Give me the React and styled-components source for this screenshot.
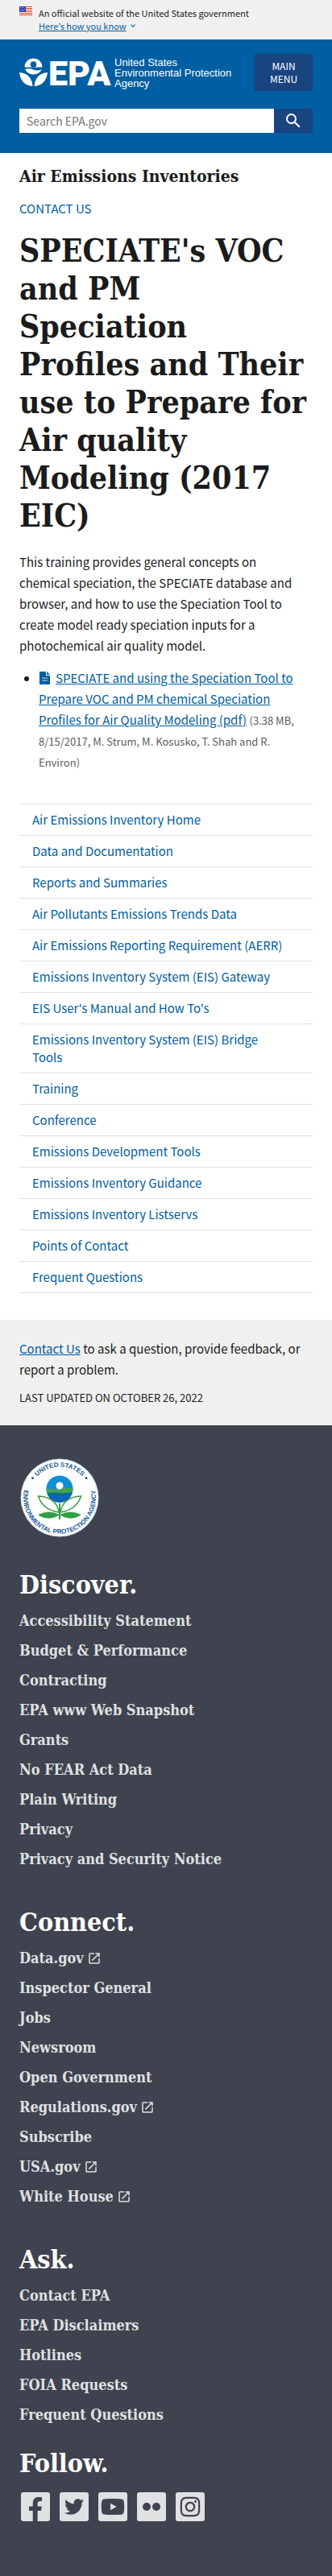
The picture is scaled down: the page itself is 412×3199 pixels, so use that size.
import React from "react";
import styled, { createGlobalStyle } from "styled-components";
import { MdExpandMore, MdLaunch, MdSearch } from "react-icons/md";
import { FaFacebookF, FaTwitter, FaYoutube, FaInstagram } from "react-icons/fa";

const sans = `"Noto Sans CJK KR", "Noto Sans", sans-serif`;
const serif = `"DejaVu Serif Condensed", "DejaVu Serif", serif`;

const GlobalStyle = createGlobalStyle`
  *, *::before, *::after { box-sizing: border-box; }
  body {
    margin: 0;
    background: #fff;
    color: #1b1b1b;
    font-family: ${sans};
    font-size: 15px;
    line-height: 26px;
  }
`;

const Link = styled.a`
  color: #005ea2;
  text-decoration: ${(p) => (p.$plain ? "none" : "underline")};
`;

const Banner = styled.section`
  display: flex;
  gap: 8px;
  padding: 8px 24px 9px;
  background: #f0f0f0;
  font-size: 11px;
  line-height: 16px;
`;

const BannerText = styled.div`
  display: flex;
  flex-direction: column;
  align-items: flex-start;
`;

const BannerToggle = styled.button`
  display: flex;
  align-items: center;
  gap: 2px;
  padding: 0;
  border: 0;
  background: none;
  color: #005ea2;
  font: inherit;
  cursor: pointer;

  span { text-decoration: underline; }
`;

const Header = styled.header`
  display: flex;
  flex-direction: column;
  gap: 22px;
  padding: 18px 24px 25px;
  background: #005ea2;
  color: #fff;
`;

const HeaderTop = styled.div`
  display: flex;
  justify-content: space-between;
  align-items: center;
`;

const Brand = styled.a`
  display: flex;
  align-items: center;
  gap: 4px;
  color: #fff;
  text-decoration: none;
  font-family: "Liberation Sans", sans-serif;
  font-size: 13px;
  line-height: 13px;
`;

const Logo = styled.svg`
  overflow: visible;
`;

const MenuButton = styled.button`
  width: 72px;
  padding: 7px 8px;
  border: 0;
  background: #1a4480;
  color: #fff;
  font-family: ${sans};
  font-size: 12px;
  line-height: 16px;
  text-transform: uppercase;
  cursor: pointer;
`;

const Search = styled.form`
  display: flex;
  height: 30px;
`;

const SearchInput = styled.input`
  flex: 1;
  min-width: 0;
  padding: 0 8px;
  border: 1px solid #fff;
  border-radius: 0;
  background: #fff;
  color: #1b1b1b;
  font-family: ${sans};
  font-size: 14px;

  &::placeholder { color: #757575; opacity: 1; }
`;

const SearchButton = styled.button`
  display: flex;
  align-items: center;
  justify-content: center;
  width: 48px;
  padding: 0;
  border: 0;
  background: #1a4480;
  color: #fff;
  cursor: pointer;
`;

const Main = styled.main`
  padding: 16px 24px 33px;
`;

const SiteName = styled.h2`
  margin: 0 0 14px;
  font-family: ${serif};
  font-size: 21px;
  line-height: 26px;
`;

const Title = styled.h1`
  margin: 16px 0 21px;
  font-family: ${serif};
  font-size: 39px;
  line-height: 47px;
`;

const Paragraph = styled.p`
  margin: 0;
`;

const Intro = styled(Paragraph)`
  padding-right: 12px;
`;

const Documents = styled.ul`
  margin: 14px 0 39px;
  padding-left: 24px;
`;

const FileDetails = styled.span`
  color: #5c5c5c;
  font-size: 13px;
  line-height: 20px;
`;

const FileIcon = styled.svg`
  margin-right: 6px;
  vertical-align: -2px;
`;

const SideNav = styled.ul`
  margin: 0;
  padding: 0;
  list-style: none;
  border-bottom: 1px solid #dfe1e2;
`;

const SideItem = styled.li`
  border-top: 1px solid #dfe1e2;

  a {
    display: block;
    padding: 8px 32px 8px 16px;
    line-height: 22px;
  }
`;

const PageFooter = styled.section`
  padding: 23px 24px 21px;
  background: #f0f0f0;
`;

const Updated = styled.p`
  margin: 9px 0 0;
  font-size: 13px;
  text-transform: uppercase;
`;

const SiteFooter = styled.footer`
  padding: 40px 24px 60px;
  background: #3f434f;
  color: #fff;
`;

const FooterHeading = styled.h2`
  margin: 0 0 6px;
  font-family: ${serif};
  font-size: 32px;
  line-height: 40px;
`;

const FooterSection = styled.section`
  margin-bottom: ${(p) => (p.$last ? 22 : 40)}px;
`;

const FooterLinks = styled.ul`
  margin: 0;
  padding: 0;
  list-style: none;
`;

const FooterLink = styled.a`
  display: flex;
  align-items: center;
  gap: 4px;
  color: #dfe1e2;
  font-family: ${serif};
  font-size: 18px;
  font-weight: 700;
  line-height: 37px;
  text-decoration: none;
`;

const Social = styled.div`
  display: flex;
  gap: 12px;
  padding: 10px 2px;
`;

const SocialLink = styled.a`
  display: flex;
  align-items: ${(p) => (p.$bottom ? "flex-end" : "center")};
  justify-content: center;
  width: 36px;
  height: 36px;
  border-radius: 3px;
  background: #dfe1e2;
  color: #3f434f;
`;

const Seal = styled.svg`
  display: block;
  margin: 0 0 38px;
`;

const Flag = () => (
  <svg width="16" height="11" viewBox="0 0 16 11" aria-hidden="true">
    <rect width="16" height="11" fill="#fff" />
    {[0, 2, 4, 6, 8, 10].map((y) => (
      <rect key={y} y={y} width="16" height="1" fill="#db3e1f" />
    ))}
    <rect width="8" height="7" fill="#1e33b1" />
    {[1, 3, 5].map((y) =>
      [1, 3, 5].map((x) => (
        <rect key={`${x}-${y}`} x={x + (y === 3 ? 1 : 0)} y={y} width="1" height="1" fill="#cfd5f5" />
      ))
    )}
  </svg>
);

const EpaLogo = () => (
  <Logo width="114" height="36" viewBox="0 0 114 36" fill="#fff" aria-hidden="true">
    <path d="M6.500 11.500A11 11 0 0 1 28.500 11.500Z" />
    <circle cx="17.500" cy="8" r="3.800" fill="#005ea2" />
    <path d="M7 14Q12 12.500 17.500 14.500T28 14Q24.500 20.500 17.500 20.500T7 14Z" />
    <path d="M0 18Q15 19 16.500 35Q2 34 0 18Z" />
    <path d="M35 18Q20 19 18.500 35Q33 34 35 18Z" />
    <text x="36" y="34" fontFamily="Roboto, sans-serif" fontSize="43" fontWeight="900">EPA</text>
  </Logo>
);

const EpaSeal = () => (
  <Seal width="100" height="100" viewBox="0 0 100 100" role="img" aria-label="United States Environmental Protection Agency">
    <defs>
      <path id="seal-top" d="M11.500 50A38.500 38.500 0 0 1 88.500 50" />
      <path id="seal-bottom" d="M18 18A45 45 0 1 0 82 18" />
    </defs>
    <circle cx="50" cy="50" r="48" fill="#fff" stroke="#c5e3fa" strokeWidth="1" />
    <g fill="#1a5a96" fontFamily="Liberation Sans, sans-serif" fontSize="8" fontWeight="700" textAnchor="middle">
      <text><textPath href="#seal-top" startOffset="50%">UNITED STATES</textPath></text>
      <text><textPath href="#seal-bottom" startOffset="50%">ENVIRONMENTAL PROTECTION AGENCY</textPath></text>
      <circle cx="16.500" cy="25.500" r="1.500" />
      <circle cx="83" cy="25.500" r="1.500" />
    </g>
    <circle cx="50" cy="39.500" r="16.500" fill="#0a66b7" />
    <path d="M33.500 39A16.500 16.500 0 0 1 66.500 39Z" fill="#1090d4" />
    <path d="M33.500 38Q42 40 50 38.500T66.500 38.500L66 43Q58 45 50 44T34 44Z" fill="#41a548" />
    <circle cx="50" cy="35" r="4.500" fill="#fff" />
    <g fill="#fff" stroke="#3a9c45" strokeWidth="1.500">
      <path d="M49 68Q46 49 23.500 48Q29 65 49 68Z" />
      <path d="M51 68Q54 49 76.500 48Q71 65 51 68Z" />
    </g>
    <g fill="#2f9e44">
      <path d="M23 71Q37 64 50 71Q36 80 23 71Z" />
      <path d="M50 71Q63 64 77 71Q64 80 50 71Z" />
      <rect x="49" y="57" width="2" height="20" />
    </g>
  </Seal>
);

const sideLinks = [
  "Air Emissions Inventory Home",
  "Data and Documentation",
  "Reports and Summaries",
  "Air Pollutants Emissions Trends Data",
  "Air Emissions Reporting Requirement (AERR)",
  "Emissions Inventory System (EIS) Gateway",
  "EIS User's Manual and How To's",
  "Emissions Inventory System (EIS) Bridge Tools",
  "Training",
  "Conference",
  "Emissions Development Tools",
  "Emissions Inventory Guidance",
  "Emissions Inventory Listservs",
  "Points of Contact",
  "Frequent Questions",
];

const footerGroups = [
  {
    title: "Discover.",
    links: [
      "Accessibility Statement",
      "Budget & Performance",
      "Contracting",
      "EPA www Web Snapshot",
      "Grants",
      "No FEAR Act Data",
      "Plain Writing",
      "Privacy",
      "Privacy and Security Notice",
    ],
  },
  {
    title: "Connect.",
    links: [
      "Data.gov",
      "Inspector General",
      "Jobs",
      "Newsroom",
      "Open Government",
      "Regulations.gov",
      "Subscribe",
      "USA.gov",
      "White House",
    ],
  },
  {
    title: "Ask.",
    links: ["Contact EPA", "EPA Disclaimers", "Hotlines", "FOIA Requests", "Frequent Questions"],
  },
];

const external = new Set(["Data.gov", "Regulations.gov", "USA.gov", "White House"]);

export default function App() {
  return (
    <>
      <GlobalStyle />
      <Banner aria-label="Official website">
        <Flag />
        <BannerText>
          <div>An official website of the United States government</div>
          <BannerToggle type="button">
            <span>Here’s how you know</span>
            <MdExpandMore size={12} />
          </BannerToggle>
        </BannerText>
      </Banner>
      <Header>
        <HeaderTop>
          <Brand href="#home">
            <EpaLogo />
            <span>
              United States
              <br />
              Environmental Protection
              <br />
              Agency
            </span>
          </Brand>
          <MenuButton type="button">Main Menu</MenuButton>
        </HeaderTop>
        <Search role="search">
          <SearchInput type="search" aria-label="Search" placeholder="Search EPA.gov" />
          <SearchButton type="button" aria-label="Search">
            <MdSearch size={24} />
          </SearchButton>
        </Search>
      </Header>
      <Main>
        <SiteName>Air Emissions Inventories</SiteName>
        <Link $plain href="#contact">CONTACT US</Link>
        <Title>
          SPECIATE's VOC and PM Speciation Profiles and Their use to Prepare for Air quality Modeling (2017 EIC)
        </Title>
        <Intro>
          This training provides general concepts on chemical speciation, the SPECIATE database and browser, and how
          to use the Speciation Tool to create model ready speciation inputs for a photochemical air quality model.
        </Intro>
        <Documents>
          <li>
            <FileIcon width="15" height="17" viewBox="0 0 15 17" aria-hidden="true">
              <path d="M1 1h8v5h5v11H1Z" fill="#005ea2" />
              <path d="M10 1l4 4h-4Z" fill="#005ea2" />
              <path d="M4 9h7M4 12h7" stroke="#bcd6ea" strokeWidth="1" />
            </FileIcon>
            <Link href="#file">
              SPECIATE and using the Speciation Tool to Prepare VOC and PM chemical Speciation Profiles for Air
              Quality Modeling (pdf)
            </Link>{" "}
            <FileDetails>(3.38 MB, 8/15/2017, M. Strum, M. Kosusko, T. Shah and R. Environ)</FileDetails>
          </li>
        </Documents>
        <nav aria-label="Side navigation">
          <SideNav>
            {sideLinks.map((label) => (
              <SideItem key={label}>
                <Link $plain href="#nav">{label}</Link>
              </SideItem>
            ))}
          </SideNav>
        </nav>
      </Main>
      <PageFooter>
        <Paragraph>
          <Link href="#contact">Contact Us</Link> to ask a question, provide feedback, or report a problem.
        </Paragraph>
        <Updated>Last updated on October 26, 2022</Updated>
      </PageFooter>
      <SiteFooter>
        <EpaSeal />
        {footerGroups.map((group, i) => (
          <FooterSection key={group.title} $last={i === footerGroups.length - 1}>
            <FooterHeading>{group.title}</FooterHeading>
            <FooterLinks>
              {group.links.map((label) => (
                <li key={label}>
                  <FooterLink href="#footer">
                    {label}
                    {external.has(label) && <MdLaunch size={18} aria-hidden="true" />}
                  </FooterLink>
                </li>
              ))}
            </FooterLinks>
          </FooterSection>
        ))}
        <FooterHeading>Follow.</FooterHeading>
        <Social>
          <SocialLink href="#facebook" aria-label="Facebook" $bottom><FaFacebookF size={30} /></SocialLink>
          <SocialLink href="#twitter" aria-label="Twitter"><FaTwitter size={24} /></SocialLink>
          <SocialLink href="#youtube" aria-label="YouTube"><FaYoutube size={30} /></SocialLink>
          <SocialLink href="#flickr" aria-label="Flickr">
            <svg width="24" height="12" viewBox="0 0 24 12" fill="currentColor">
              <circle cx="6" cy="6" r="5" />
              <circle cx="18" cy="6" r="5" />
            </svg>
          </SocialLink>
          <SocialLink href="#instagram" aria-label="Instagram"><FaInstagram size={28} /></SocialLink>
        </Social>
      </SiteFooter>
    </>
  );
}
